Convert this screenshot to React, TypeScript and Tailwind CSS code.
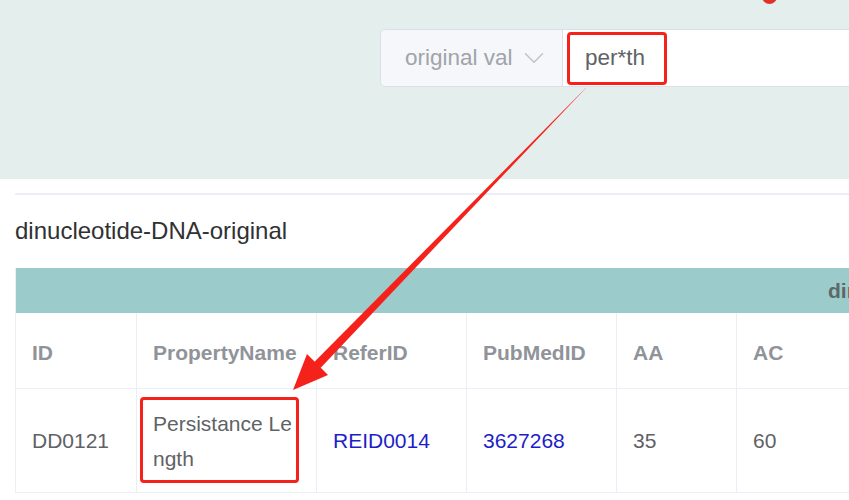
import React from 'react';
import { ChevronDown } from 'lucide-react';

const columns = [
  { key: 'id', label: 'ID', w: 'w-[121px]' },
  { key: 'name', label: 'PropertyName', w: 'w-[180px]' },
  { key: 'refer', label: 'ReferID', w: 'w-[150px]' },
  { key: 'pubmed', label: 'PubMedID', w: 'w-[150px]' },
  { key: 'aa', label: 'AA', w: 'w-[120px]' },
  { key: 'ac', label: 'AC', w: 'w-[140px]' },
];

const row: Record<string, string> = {
  id: 'DD0121',
  name: 'Persistance Length',
  refer: 'REID0014',
  pubmed: '3627268',
  aa: '35',
  ac: '60',
};

const links = ['refer', 'pubmed'];

export default function App() {
  return (
    <div className="relative w-[849px] h-[500px] overflow-hidden bg-white font-['Liberation_Sans',Arial,sans-serif]">
      {/* search bar area */}
      <div className="h-[179px] bg-[#e4eeed] pt-[29px] pl-[380px]">
        <div className="flex h-[58px] w-[520px] rounded-[6px] border-[1.5px] border-[#dcdfe6] bg-white overflow-hidden">
          <div className="flex items-center w-[182px] shrink-0 bg-[#f5f7fa] border-r-[1.5px] border-[#dcdfe6] pl-[24px]">
            <span className="w-[107px] shrink-0 overflow-hidden whitespace-nowrap text-[22.5px] text-[#a0a4aa]">original value</span>
            <ChevronDown size={34} strokeWidth={1.1} className="ml-[5px] shrink-0 text-[#c0c4cc]" />
          </div>
          <div className="flex items-center pl-[22px] text-[22.5px] text-[#606266]">per*th</div>
        </div>
      </div>

      {/* result panel */}
      <div className="pt-[14px] pl-[15px]">
        <div className="h-[2px] bg-[#ebeef5]" />
        <div className="mt-[18px] h-[36px] leading-[36px] text-[24px] text-[#303133]">dinucleotide-DNA-original</div>

        <div className="mt-[19px] border-l border-[#ebeef5]">
          <div className="h-[45px] bg-[#9ccbcc] flex items-center pl-[812px] text-[21px] font-bold text-[#5d6868] whitespace-nowrap">
            dinucleotide
          </div>
          <div className="flex h-[76px] border-b border-[#ebeef5]">
            {columns.map((c) => (
              <div
                key={c.key}
                className={`${c.w} shrink-0 border-r border-[#ebeef5] px-[16px] pt-[4px] flex items-center text-[21px] font-bold text-[#909399]`}
              >
                {c.label}
              </div>
            ))}
          </div>
          <div className="flex h-[104px] border-b border-[#ebeef5]">
            {columns.map((c) => (
              <div
                key={c.key}
                className={`${c.w} shrink-0 border-r border-[#ebeef5] px-[16px] flex items-center text-[21px] leading-[35px] break-all ${
                  links.includes(c.key) ? 'text-[#1e1ec8]' : 'text-[#606266]'
                }`}
              >
                {row[c.key]}
              </div>
            ))}
          </div>
        </div>
      </div>

      {/* annotation overlay */}
      <div className="absolute left-[762px] top-[-11px] w-[15px] h-[15px] rounded-full bg-[#e0322b]" />
      <div className="absolute left-[567px] top-[32px] w-[100px] h-[53px] rounded-[4px] border-[3px] border-[#f5221b]" />
      <div className="absolute left-[140px] top-[397px] w-[159px] h-[86px] rounded-[4px] border-[3px] border-[#f5221b]" />
      <svg className="absolute inset-0 pointer-events-none" width="849" height="500" viewBox="0 0 849 500">
        <polygon points="585,88.8 586.4,87.4 320.5,368 314.3,362" fill="#f5221b" />
        <polygon points="293,390 307,354 328,375" fill="#f5221b" />
      </svg>
    </div>
  );
}
